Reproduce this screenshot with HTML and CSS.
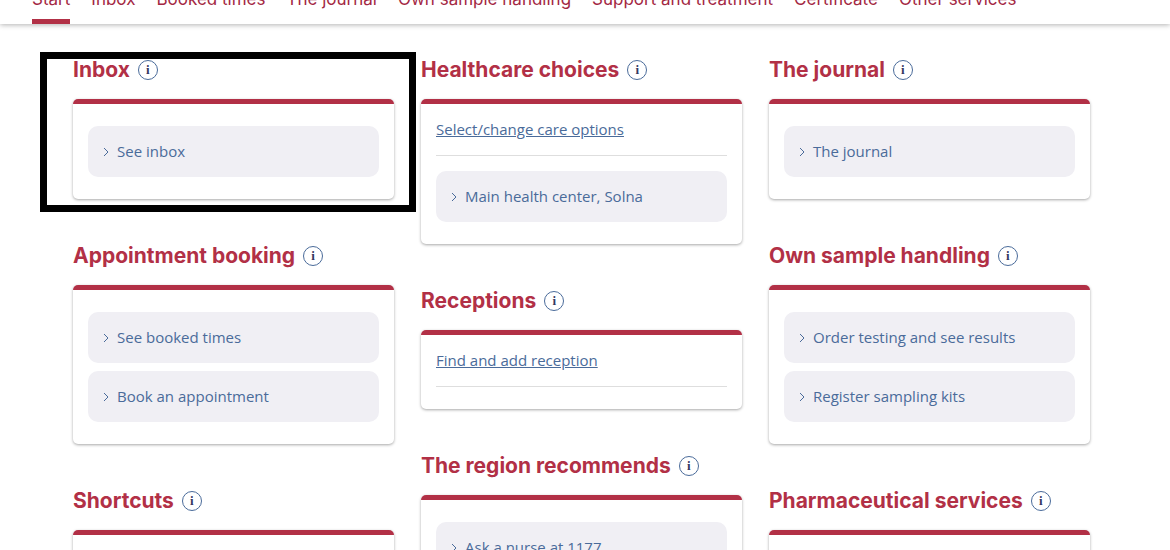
FILE: index.html
```html
<!DOCTYPE html>
<html lang="en">

<head>
    <meta charset="UTF-8">
    <meta name="viewport" content="width=device-width, initial-scale=1.0">
    <title>Start</title>
    <link rel="stylesheet" href="styles.css">
</head>

<body>

    <nav class="main-nav">
        <a href="#" class="active">Start</a>
        <a href="#">Inbox</a>
        <a href="#">Booked times</a>
        <a href="#">The journal</a>
        <a href="#">Own sample handling</a>
        <a href="#">Support and treatment</a>
        <a href="#">Certificate</a>
        <a href="#">Other services</a>
    </nav>

    <main class="board">
        <div class="column">
            <section class="highlighted">
                <div class="heading">
                    <h2>Inbox</h2>
                    <button type="button" class="info">i</button>
                </div>
                <div class="card">
                    <a href="#" class="item"><svg class="chevron" viewBox="0 0 7 10"><path d="M1 1l4 4-4 4" /></svg>See inbox</a>
                </div>
            </section>

            <section>
                <div class="heading">
                    <h2>Appointment booking</h2>
                    <button type="button" class="info">i</button>
                </div>
                <div class="card">
                    <a href="#" class="item"><svg class="chevron" viewBox="0 0 7 10"><path d="M1 1l4 4-4 4" /></svg>See booked times</a>
                    <a href="#" class="item"><svg class="chevron" viewBox="0 0 7 10"><path d="M1 1l4 4-4 4" /></svg>Book an appointment</a>
                </div>
            </section>

            <section>
                <div class="heading">
                    <h2>Shortcuts</h2>
                    <button type="button" class="info">i</button>
                </div>
                <div class="card"></div>
            </section>
        </div>

        <div class="column">
            <section>
                <div class="heading">
                    <h2>Healthcare choices</h2>
                    <button type="button" class="info">i</button>
                </div>
                <div class="card with-link">
                    <div class="link-row"><a href="#">Select/change care options</a></div>
                    <a href="#" class="item"><svg class="chevron" viewBox="0 0 7 10"><path d="M1 1l4 4-4 4" /></svg>Main health center, Solna</a>
                </div>
            </section>

            <section>
                <div class="heading">
                    <h2>Receptions</h2>
                    <button type="button" class="info">i</button>
                </div>
                <div class="card with-link">
                    <div class="link-row"><a href="#">Find and add reception</a></div>
                </div>
            </section>

            <section>
                <div class="heading">
                    <h2>The region recommends</h2>
                    <button type="button" class="info">i</button>
                </div>
                <div class="card">
                    <a href="#" class="item"><svg class="chevron" viewBox="0 0 7 10"><path d="M1 1l4 4-4 4" /></svg>Ask a nurse at 1177</a>
                </div>
            </section>
        </div>

        <div class="column">
            <section>
                <div class="heading">
                    <h2>The journal</h2>
                    <button type="button" class="info">i</button>
                </div>
                <div class="card">
                    <a href="#" class="item"><svg class="chevron" viewBox="0 0 7 10"><path d="M1 1l4 4-4 4" /></svg>The journal</a>
                </div>
            </section>

            <section>
                <div class="heading">
                    <h2>Own sample handling</h2>
                    <button type="button" class="info">i</button>
                </div>
                <div class="card">
                    <a href="#" class="item"><svg class="chevron" viewBox="0 0 7 10"><path d="M1 1l4 4-4 4" /></svg>Order testing and see results</a>
                    <a href="#" class="item"><svg class="chevron" viewBox="0 0 7 10"><path d="M1 1l4 4-4 4" /></svg>Register sampling kits</a>
                </div>
            </section>

            <section>
                <div class="heading">
                    <h2>Pharmaceutical services</h2>
                    <button type="button" class="info">i</button>
                </div>
                <div class="card"></div>
            </section>
        </div>
    </main>

</body>

</html>
```
FILE: styles.css
```css
* {
    box-sizing: border-box;
}

body {
    margin: 0;
    height: 100vh;
    overflow: hidden;
    background-color: #fff;
    font-family: "Open Sans", sans-serif;
    font-size: 15px;
    color: #4a6b9a;
}

a {
    color: inherit;
}

.main-nav {
    display: flex;
    gap: 21px;
    margin-top: -13px;
    padding: 0 32px;
    box-shadow: 0 1px 5px rgba(0, 0, 0, 0.3);
    font-family: Inter, sans-serif;
    font-size: 17px;
    line-height: 24px;
    color: #a32843;
}

.main-nav a {
    padding-bottom: 8px;
    border-bottom: 5px solid transparent;
    text-decoration: none;
    white-space: nowrap;
}

.main-nav .active {
    border-color: #b23046;
}

.board {
    display: grid;
    grid-template-columns: repeat(3, 1fr);
    gap: 27px;
    padding: 31px 80px 0 73px;
}

.column {
    display: flex;
    flex-direction: column;
    gap: 42px;
}

.heading {
    display: flex;
    align-items: center;
    gap: 8px;
    margin-bottom: 14px;
}

h2 {
    margin: 0;
    font-family: Inter, sans-serif;
    font-size: 21px;
    font-weight: 700;
    line-height: 30px;
    color: #b23046;
}

.info {
    width: 20px;
    height: 20px;
    padding: 0;
    border: 1px solid #4a6b9a;
    border-radius: 50%;
    background: none;
    font-family: "Liberation Serif", serif;
    font-size: 13px;
    font-weight: 700;
    line-height: 16px;
    color: #35385f;
    cursor: pointer;
}

.card {
    display: flex;
    flex-direction: column;
    gap: 8px;
    min-height: 79px;
    padding: 22px 15px;
    border-top: 5px solid #b23046;
    border-radius: 5px;
    box-shadow: 0 1px 3px rgba(0, 0, 0, 0.35);
}

.with-link {
    gap: 15px;
    padding-top: 0;
}

.link-row {
    border-bottom: 1px solid #dedede;
    line-height: 51px;
}

.item {
    display: flex;
    align-items: center;
    gap: 7px;
    padding: 0 15px;
    border-radius: 10px;
    background-color: #f0eff4;
    line-height: 51px;
    text-decoration: none;
}

.chevron {
    width: 7px;
    height: 10px;
    fill: none;
    stroke: #4a6b9a;
}

/* black frame drawn around a section */
.highlighted {
    position: relative;
}

.highlighted::after {
    content: "";
    position: absolute;
    inset: -3px -22px -13px -33px;
    border: 7px solid #000;
    pointer-events: none;
}
```
